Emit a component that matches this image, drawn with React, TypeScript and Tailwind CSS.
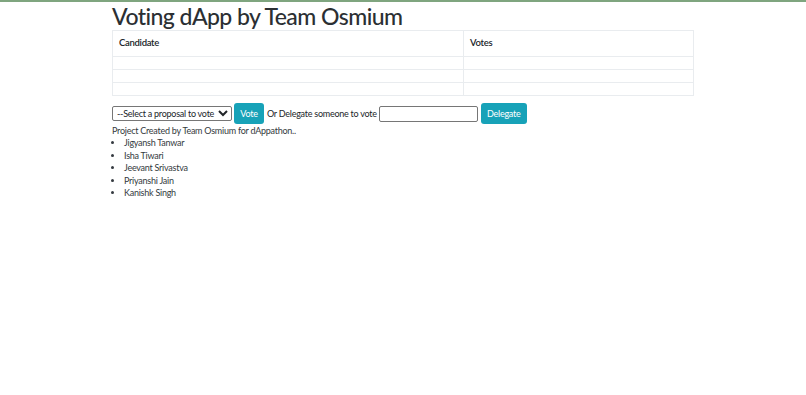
export default function App() {
  const team = ["Jigyansh Tanwar", "Isha Tiwari", "Jeevant Srivastva", "Priyanshi Jain", "Kanishk Singh"];
  return (
    <div className="min-h-[395px] w-full bg-white text-[#212529] font-['Lato',sans-serif] border-t-2 border-[#7fa57f]">
      <div className="w-[582px] ml-[112px]">
        <h1 className="text-[23px] font-medium leading-[26px] mt-[1px] tracking-[-0.55px] text-[#2b2f33]">Voting dApp by Team Osmium</h1>

        <table className="w-full mt-[1px] border-collapse text-[9.5px] tracking-[-0.3px]">
          <thead>
            <tr>
              <th className="w-[351px] border border-[#e9ecef] text-left font-semibold px-[6px] h-[26px]">Candidate</th>
              <th className="border border-[#e9ecef] text-left font-semibold px-[6px] h-[26px]">Votes</th>
            </tr>
          </thead>
          <tbody>
            {[0, 1, 2].map((i) => (
              <tr key={i}>
                <td className="border border-[#e9ecef] h-[13px]"></td>
                <td className="border border-[#e9ecef] h-[13px]"></td>
              </tr>
            ))}
          </tbody>
        </table>

        <div className="flex items-center mt-[7px] text-[9px] tracking-[-0.25px]">
          <select className="w-[120px] h-[15px] border border-[#767676] rounded-[2px] text-[9px] leading-none px-0 tracking-[-0.25px]">
            <option>--Select a proposal to vote --</option>
          </select>
          <button className="ml-[2px] w-[30px] h-[21px] bg-[#17a2b8] text-white rounded-[3px]">Vote</button>
          <span className="ml-[3px]">Or Delegate someone to vote</span>
          <input className="ml-[2px] w-[99px] h-[16px] border border-[#767676] rounded-[2px]" />
          <button className="ml-[3px] w-[46px] h-[21px] bg-[#17a2b8] text-white rounded-[3px]">Delegate</button>
        </div>

        <div className="text-[9px] tracking-[-0.25px] text-[#343a40]">
          <p className="mt-[0px] leading-[13px]">Project Created by Team Osmium for dAppathon..</p>
          <ul className="list-disc pl-[12px] leading-[12.5px]">
            {team.map((n) => (
              <li key={n}>{n}</li>
            ))}
          </ul>
        </div>
      </div>
    </div>
  );
}
